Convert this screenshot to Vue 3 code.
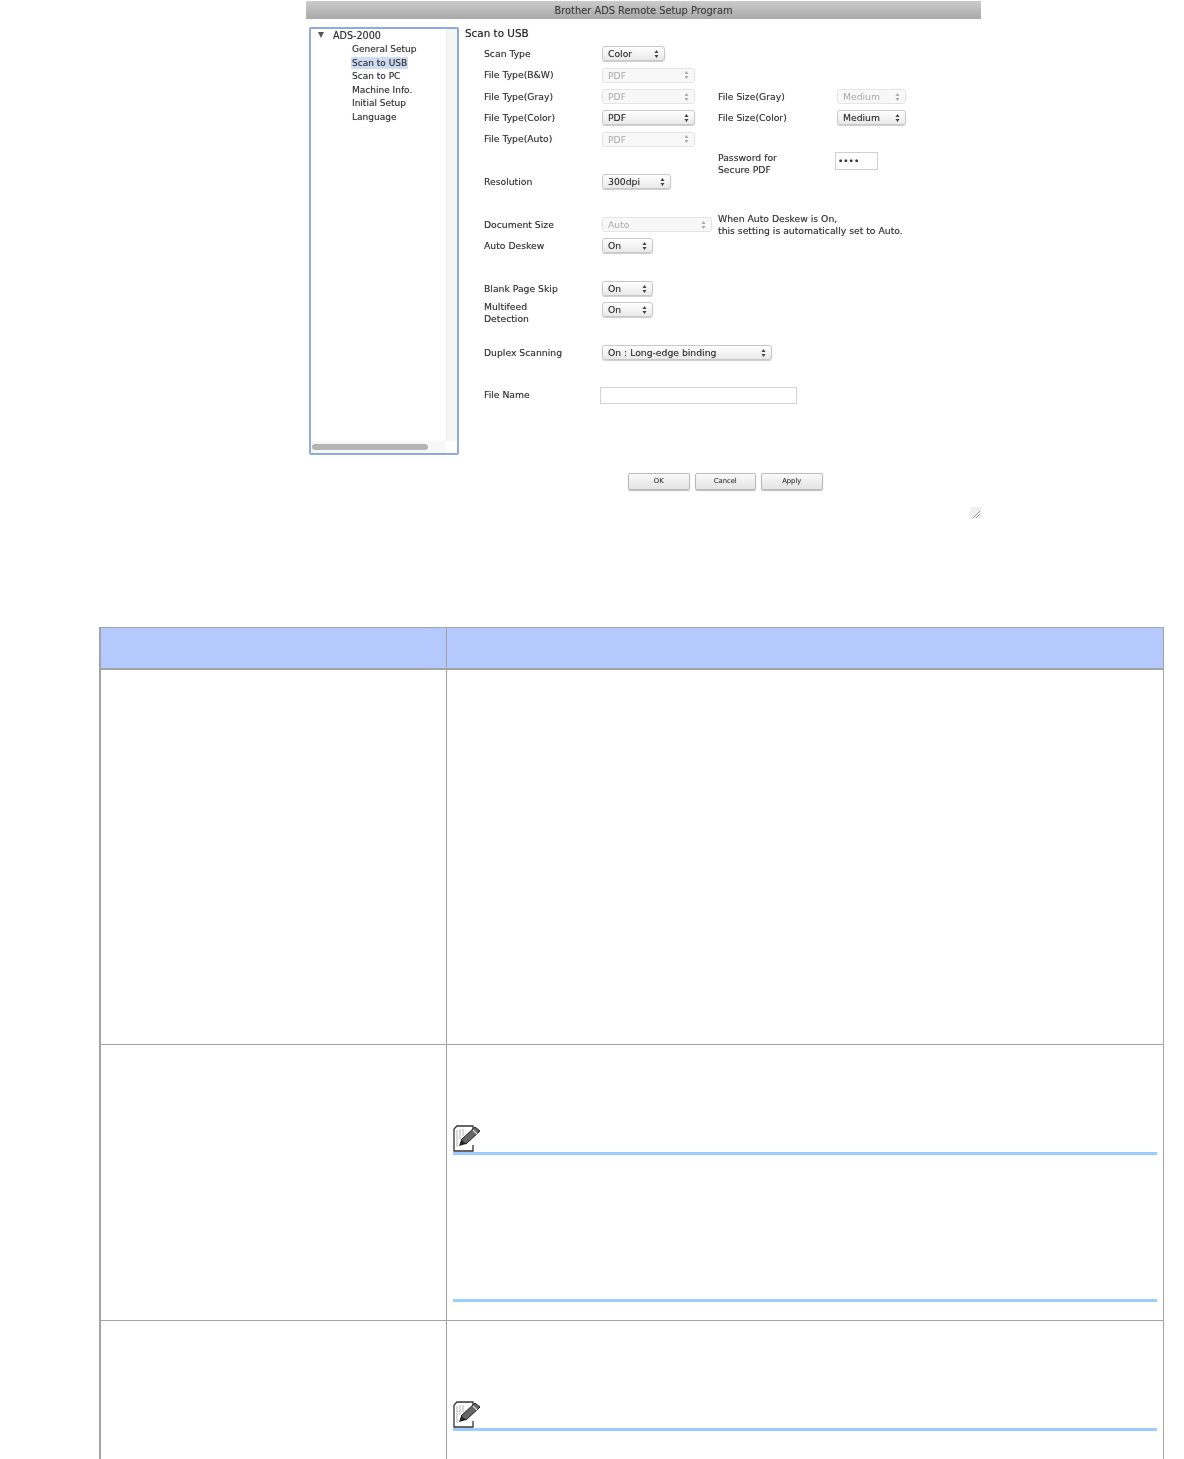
<template>
<div class="page">
  <div class="shot">
    <div class="titlebar">Brother ADS Remote Setup Program</div>
    <div class="shot-body">
      <div class="tree">
        <div class="tree-list">
          <div class="tree-root"><span class="arrow"></span>ADS-2000</div>
          <div v-for="item in treeItems" :key="item" class="tree-item">
            <span :class="{ selected: item === 'Scan to USB' }">{{ item }}</span>
          </div>
        </div>
        <div class="vtrack"></div>
        <div class="htrack"><div class="hthumb"></div></div>
        <div class="corner"></div>
      </div>
      <div class="form">
        <div class="form-title">Scan to USB</div>
        <div v-for="(row, i) in rows" :key="i" class="row">
          <div class="label" :class="{ low: row.low }">{{ row.label }}</div>
          <div>
            <div v-if="row.select" class="select" :class="{ off: row.off }" :style="{ width: row.w + 'px' }">
              <span>{{ row.select }}</span>
              <svg width="5" height="8" viewBox="0 0 5 8"><path d="M2.5 0 L4.5 3 H.5 Z M2.5 8 L.5 5 H4.5 Z" /></svg>
            </div>
            <div v-if="row.input" class="input"></div>
          </div>
          <div class="label" :class="{ low: row.low2 }">{{ row.label2 }}</div>
          <div>
            <div v-if="row.select2" class="select size" :class="{ off: row.off2 }">
              <span>{{ row.select2 }}</span>
              <svg width="5" height="8" viewBox="0 0 5 8"><path d="M2.5 0 L4.5 3 H.5 Z M2.5 8 L.5 5 H4.5 Z" /></svg>
            </div>
            <div v-if="row.password" class="password">••••</div>
          </div>
        </div>
      </div>
    </div>
    <div class="buttons">
      <div class="btn">OK</div>
      <div class="btn">Cancel</div>
      <div class="btn">Apply</div>
    </div>
    <svg class="grip" width="11" height="12" viewBox="0 0 11 12">
      <path d="M0 0 H11 V12 H0 Z" fill="#f0f0f0" />
      <path d="M3 11 L10 4 M6 11 L10 7" stroke="#9a9a9a" stroke-width="1" />
    </svg>
  </div>

  <table class="info">
    <thead>
      <tr><th class="col1"></th><th></th></tr>
    </thead>
    <tbody>
      <tr class="r1"><td></td><td></td></tr>
      <tr class="r2">
        <td></td>
        <td>
          <div class="note">
            <svg class="note-icon" width="28" height="27" viewBox="0 0 28 27">
              <path d="M1 4 L4 1 H20 V5 M1 4 V26 H20 V20" fill="#fff" stroke="#333" stroke-width="1.3" />
              <path d="M4 5 V22 M7 4 V14 M10 4 V11" stroke="#ccc" stroke-width="1.5" />
              <path d="M22 2 L27 6 L13 19 L8 15 Z" fill="#666" stroke="#222" stroke-width="1" />
              <path d="M8 15 L6 21 L13 19 Z" fill="#222" />
              <path d="M20 5 L24 9" stroke="#ddd" stroke-width="1.2" />
            </svg>
          </div>
          <div class="note-body"></div>
        </td>
      </tr>
      <tr class="r3">
        <td></td>
        <td>
          <div class="note">
            <svg class="note-icon" width="28" height="27" viewBox="0 0 28 27">
              <path d="M1 4 L4 1 H20 V5 M1 4 V26 H20 V20" fill="#fff" stroke="#333" stroke-width="1.3" />
              <path d="M4 5 V22 M7 4 V14 M10 4 V11" stroke="#ccc" stroke-width="1.5" />
              <path d="M22 2 L27 6 L13 19 L8 15 Z" fill="#666" stroke="#222" stroke-width="1" />
              <path d="M8 15 L6 21 L13 19 Z" fill="#222" />
              <path d="M20 5 L24 9" stroke="#ddd" stroke-width="1.2" />
            </svg>
          </div>
        </td>
      </tr>
    </tbody>
  </table>
</div>
</template>

<script setup>
const treeItems = ['General Setup', 'Scan to USB', 'Scan to PC', 'Machine Info.', 'Initial Setup', 'Language'];

// low: two line labels that sit a little under the middle of their row
const rows = [
  { label: 'Scan Type', select: 'Color', w: 63 },
  { label: 'File Type(B&W)', select: 'PDF', w: 93, off: true },
  { label: 'File Type(Gray)', select: 'PDF', w: 93, off: true, label2: 'File Size(Gray)', select2: 'Medium', off2: true },
  { label: 'File Type(Color)', select: 'PDF', w: 93, label2: 'File Size(Color)', select2: 'Medium' },
  { label: 'File Type(Auto)', select: 'PDF', w: 93, off: true },
  { label2: 'Password for\nSecure PDF', low2: true, password: true },
  { label: 'Resolution', select: '300dpi', w: 69 },
  {},
  { label: 'Document Size', select: 'Auto', w: 110, off: true, label2: 'When Auto Deskew is On,\nthis setting is automatically set to Auto.' },
  { label: 'Auto Deskew', select: 'On', w: 51 },
  {},
  { label: 'Blank Page Skip', select: 'On', w: 51 },
  { label: 'Multifeed\nDetection', low: true, select: 'On', w: 51 },
  {},
  { label: 'Duplex Scanning', select: 'On : Long-edge binding', w: 170 },
  {},
  { label: 'File Name', input: true }
];
</script>

<style>
html, body {
  background: #fff;
}
</style>

<style scoped>
.page {
  width: 1184px;
  height: 1459px;
  overflow: hidden;
  background: #fff;
  font-family: "DejaVu Sans", sans-serif;
}

/* the original is a soft, scaled down screenshot */
.shot {
  width: 675px;
  margin-left: 306px;
  padding-top: 1px;
  display: flex;
  flex-direction: column;
  color: #333;
  font-size: 9.25px;
  text-shadow: 0 0 1px rgba(70, 70, 70, 0.55);
  filter: blur(0.75px);
}

.titlebar {
  height: 18px;
  line-height: 19px;
  text-align: center;
  font-size: 9.85px;
  color: #444;
  background: linear-gradient(#cbcbcb, #a9a9a9);
}

.shot-body {
  display: flex;
  height: 435px;
}

.tree {
  width: 150px;
  height: 428px;
  margin: 8px 0 0 3px;
  box-sizing: border-box;
  border: 2px solid #8dabdf;
  border-radius: 2px;
  display: grid;
  grid-template-columns: 1fr 11px;
  grid-template-rows: 1fr 12px;
}

.tree-list {
  font-size: 9px;
  line-height: 13.5px;
}

.tree-root {
  display: flex;
  align-items: center;
  padding-left: 7px;
  height: 14px;
  font-size: 9.6px;
}

.arrow {
  width: 0;
  height: 0;
  border-left: 3.5px solid transparent;
  border-right: 3.5px solid transparent;
  border-top: 6px solid #555;
  margin-right: 9px;
  margin-top: -3px;
}

.tree-item {
  padding-left: 41px;
  height: 13.5px;
}

.selected {
  background: #cfdcf6;
  padding: 1px;
  margin-left: -1px;
}

.vtrack {
  background: #f5f5f5;
  border-left: 1px solid #ececec;
}

.htrack {
  background: #f7f7f7;
  padding: 3px 0 0 1px;
}

.hthumb {
  width: 116px;
  height: 6px;
  border-radius: 3px;
  background: #b4b4b4;
}

.corner {
  background: #fff;
}

.form {
  margin-left: 6px;
  flex: 1;
  padding-top: 8px;
}

.form-title {
  height: 16.3px;
  line-height: 13px;
  font-size: 10.4px;
  color: #222;
}

.row {
  display: grid;
  grid-template-columns: 118px 116px 119px 1fr;
  grid-template-rows: 21.33px;
  height: 21.33px;
  align-items: center;
  padding-left: 19px;
}

.label {
  white-space: pre;
  line-height: 12px;
}

.label.low {
  padding-top: 6px;
}

.select {
  height: 15px;
  box-sizing: border-box;
  padding: 0 5px;
  display: flex;
  align-items: center;
  justify-content: space-between;
  border: 1px solid #c8c8c8;
  border-radius: 3px;
  background: linear-gradient(#fff, #e9e9e9);
  box-shadow: 0 1px 1px #ccc;
  color: #333;
}

.select.size {
  width: 69px;
}

.select svg {
  fill: #444;
  flex: none;
}

.select.off {
  border-color: #e4e4e4;
  background: #f8f8f8;
  box-shadow: none;
  color: #aaa;
  text-shadow: none;
}

.select.off svg {
  fill: #aaa;
}

.input {
  margin-left: -2px;
  width: 197px;
  height: 17px;
  box-sizing: border-box;
  border: 1px solid #d4d4d4;
}

.password {
  margin-left: -2px;
  width: 43px;
  height: 18px;
  box-sizing: border-box;
  border: 1px solid #d0d0d0;
  padding-left: 2px;
  line-height: 16px;
  font-size: 9px;
  color: #333;
}

.buttons {
  display: flex;
  gap: 5px;
  margin: 19px 0 0 322px;
}

.btn {
  width: 61.5px;
  height: 17px;
  box-sizing: border-box;
  border: 1px solid #bbb;
  border-radius: 2px;
  background: linear-gradient(#fafafa, #e4e4e4);
  box-shadow: 0 1px 1px #bbb;
  text-align: center;
  font-size: 6.8px;
  line-height: 14px;
  color: #444;
}

.grip {
  align-self: flex-end;
  margin-top: 17px;
  display: block;
}

.info {
  margin: 108px 0 0 99px;
  width: 1065px;
  table-layout: fixed;
  border-collapse: separate;
  border-spacing: 0;
  border-top: 1px solid #a3a3a3;
  border-left: 2px solid #a3a3a3;
  border-right: 1px solid #a3a3a3;
}

.col1 {
  width: 345px;
}

th, td {
  padding: 0;
  vertical-align: top;
}

th + th, td + td {
  border-left: 1px solid #a3a3a3;
}

thead tr {
  height: 42px;
  background: #b6c9ff;
}

th {
  border-bottom: 2px solid #a3a3a3;
}

.r1 {
  height: 375px;
}

.r1 td, .r2 td {
  border-bottom: 1px solid #a3a3a3;
}

.r2 {
  height: 276px;
}

.r3 {
  height: 300px;
}

.note {
  margin: 80px 6px 0 6px;
  height: 27px;
  border-bottom: 3px solid #99ccff;
}

.note-icon {
  display: block;
  filter: blur(0.4px);
}

.note-body {
  height: 144px;
  margin: 0 6px;
  border-bottom: 3px solid #99ccff;
}
</style>
